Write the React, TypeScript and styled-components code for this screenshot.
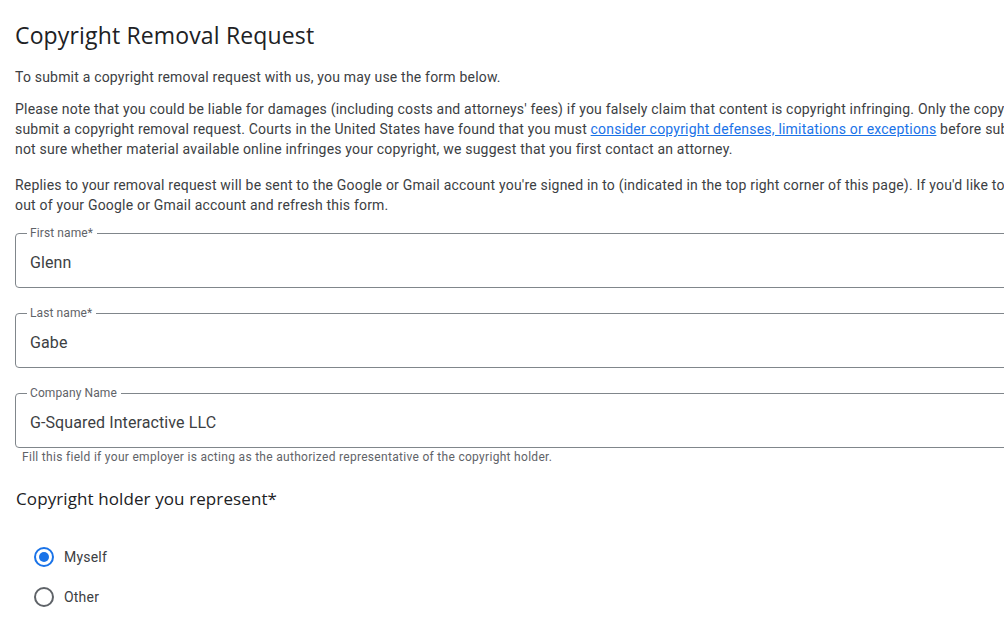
import styled, { createGlobalStyle } from "styled-components";

const GlobalStyle = createGlobalStyle`
  html, body {
    margin: 0;
    padding: 0;
    background: #ffffff;
    overflow: hidden;
  }
  body {
    font-family: Roboto, "Liberation Sans", Arial, sans-serif;
    color: #3c4043;
  }
`;

const Page = styled.main`
  width: 1600px;
  padding: 21px 0 0 15px;
  box-sizing: border-box;
`;

const Title = styled.h1`
  margin: 0;
  font-family: "Open Sans", "Noto Sans", sans-serif;
  font-size: 23px;
  line-height: 28px;
  font-weight: 400;
  letter-spacing: 0.15px;
  color: #202124;
`;

const Paragraph = styled.p<{ $top: number }>`
  margin: ${(p) => p.$top}px 0 0 0;
  font-size: 14px;
  line-height: 20px;
  letter-spacing: 0.2px;
  white-space: nowrap;
  color: #3c4043;
`;

const Link = styled.a`
  color: #1a73e8;
  text-decoration: underline;
`;

const Form = styled.form`
  margin-top: 10px;
  display: flex;
  flex-direction: column;
`;

const Field = styled.fieldset`
  margin: 0;
  width: 1400px;
  padding: 10px 14px 12px 11px;
  border: 1px solid #80868b;
  border-radius: 4px;
  & + & {
    margin-top: 17px;
  }
`;

const Legend = styled.legend`
  padding: 0 4px 0 3px;
  font-size: 12px;
  line-height: 16px;
  letter-spacing: 0.1px;
  color: #5f6368;
`;

const Value = styled.div`
  padding-left: 3px;
  font-size: 16px;
  line-height: 24px;
  letter-spacing: 0.1px;
  color: #3c4043;
`;

const Helper = styled.div`
  margin-top: 1px;
  padding-left: 7px;
  font-size: 12px;
  line-height: 16px;
  letter-spacing: 0.3px;
  color: #5f6368;
`;

const SectionHeading = styled.h2`
  margin: 21px 0 0 1px;
  font-family: "Open Sans", "Noto Sans", sans-serif;
  font-size: 17px;
  line-height: 26px;
  font-weight: 400;
  letter-spacing: 0.1px;
  color: #202124;
`;

const RadioGroup = styled.div`
  margin-top: 25px;
  padding-left: 19px;
  display: flex;
  flex-direction: column;
`;

const RadioRow = styled.label`
  display: flex;
  align-items: center;
  gap: 10px;
  height: 40px;
  font-size: 14px;
  letter-spacing: 0.2px;
  color: #3c4043;
`;

const RadioCircle = styled.span<{ $checked: boolean }>`
  flex: none;
  width: 20px;
  height: 20px;
  box-sizing: border-box;
  border-radius: 50%;
  border: 2px solid ${(p) => (p.$checked ? "#1a73e8" : "#5f6368")};
  display: flex;
  align-items: center;
  justify-content: center;
  &::after {
    content: "";
    width: 10px;
    height: 10px;
    border-radius: 50%;
    background: ${(p) => (p.$checked ? "#1a73e8" : "transparent")};
  }
`;

const fields = [
  { label: "First name*", value: "Glenn" },
  { label: "Last name*", value: "Gabe" },
  { label: "Company Name", value: "G-Squared Interactive LLC" },
];

const options = [
  { label: "Myself", checked: true },
  { label: "Other", checked: false },
];

export default function App() {
  return (
    <>
      <GlobalStyle />
      <Page>
        <Title>Copyright Removal Request</Title>
        <Paragraph $top={18}>
          To submit a copyright removal request with us, you may use the form below.
        </Paragraph>
        <Paragraph $top={12}>
          Please note that you could be liable for damages (including costs and attorneys' fees) if
          you falsely claim that content is copyright infringing. Only the copyright owner or an
          agent authorized to act on its behalf should
          <br />
          submit a copyright removal request. Courts in the United States have found that you must{" "}
          <Link href="#">consider copyright defenses, limitations or exceptions</Link> before
          submitting a request. If you're
          <br />
          not sure whether material available online infringes your copyright, we suggest that you
          first contact an attorney.
        </Paragraph>
        <Paragraph $top={16}>
          Replies to your removal request will be sent to the Google or Gmail account you're signed
          in to (indicated in the top right corner of this page). If you'd like to use a different
          account, please sign
          <br />
          out of your Google or Gmail account and refresh this form.
        </Paragraph>
        <Form>
          {fields.map((f) => (
            <Field key={f.label}>
              <Legend>{f.label}</Legend>
              <Value>{f.value}</Value>
            </Field>
          ))}
          <Helper>
            Fill this field if your employer is acting as the authorized representative of the
            copyright holder.
          </Helper>
          <SectionHeading>Copyright holder you represent*</SectionHeading>
          <RadioGroup>
            {options.map((o) => (
              <RadioRow key={o.label}>
                <RadioCircle $checked={o.checked} />
                {o.label}
              </RadioRow>
            ))}
          </RadioGroup>
        </Form>
      </Page>
    </>
  );
}
